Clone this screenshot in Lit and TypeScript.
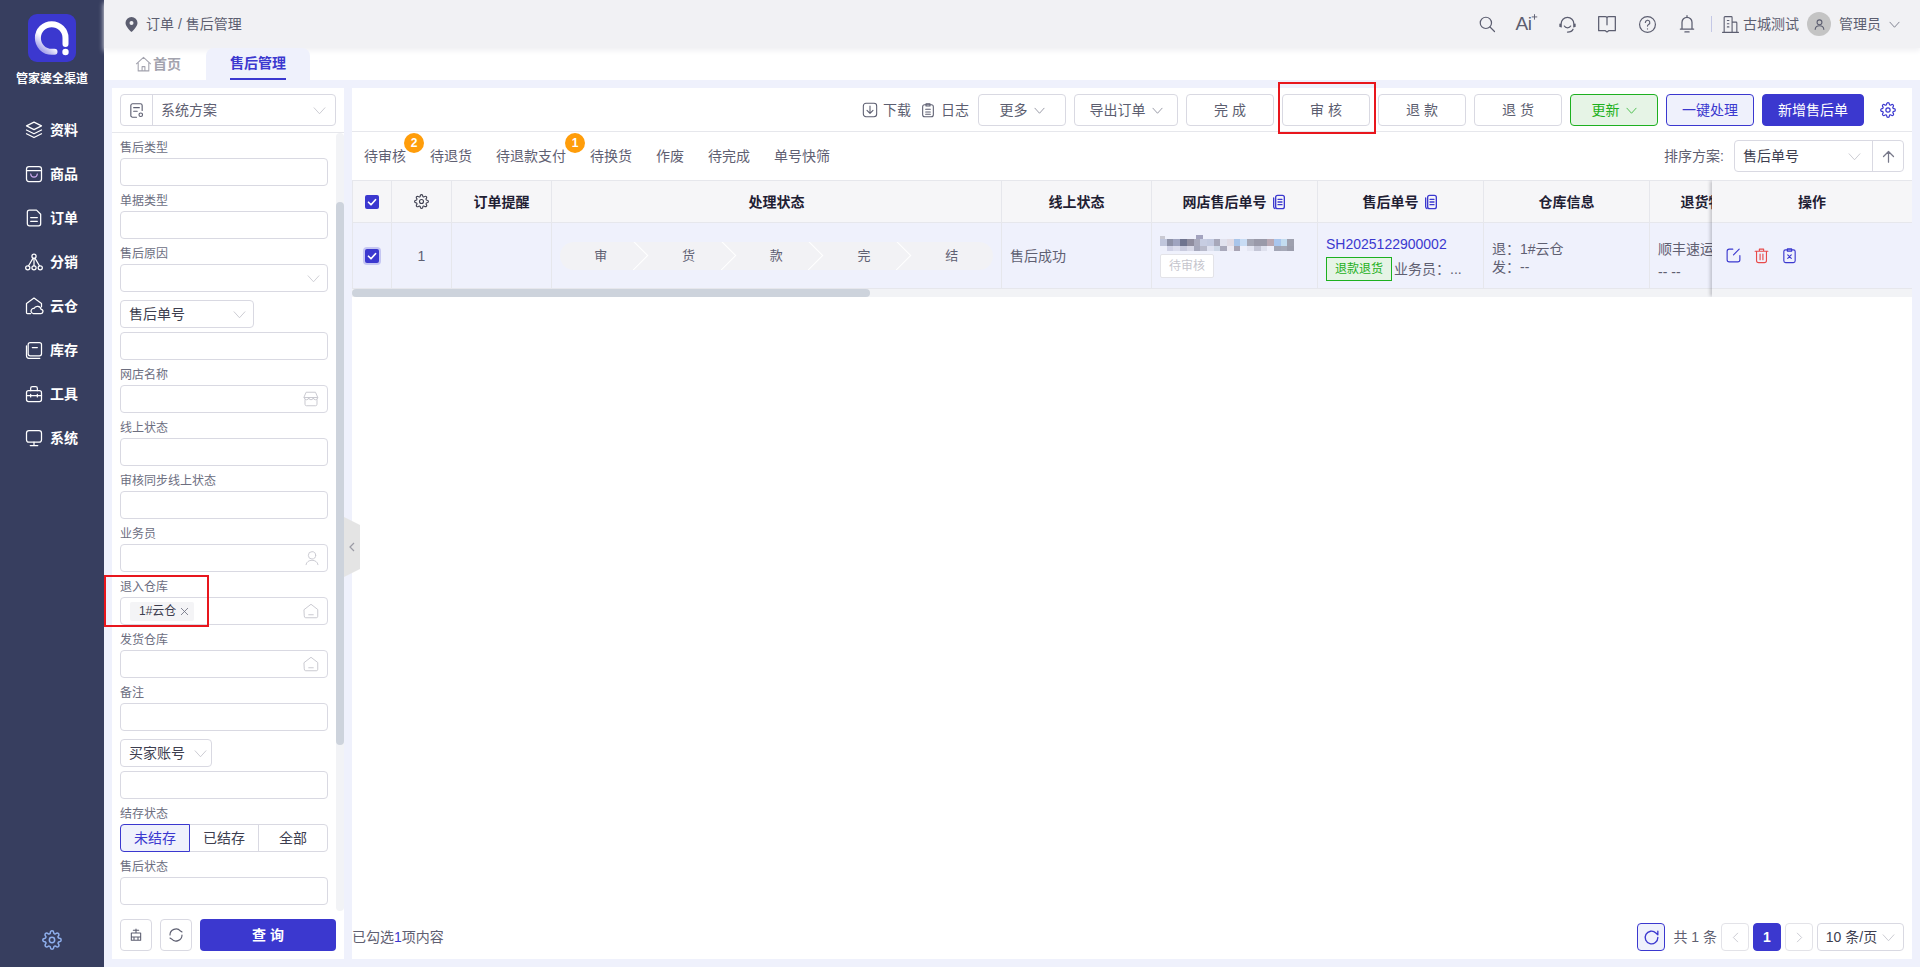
import { css, html, LitElement, svg } from 'lit';
import { customElement } from 'lit/decorators.js';

const icon = (body: unknown, size = 16, vb = 24, sw = 1.6, cls = '') =>
  html`<svg class="ic ${cls}" width=${size} height=${size} viewBox="0 0 ${vb} ${vb}" fill="none" stroke="currentColor" stroke-width=${sw} stroke-linecap="round" stroke-linejoin="round">${body}</svg>`;

const chevron = (size = 13) => icon(svg`<path d="M2 7l10 11 10-11"/>`, size, 24, 1.6, 'chev');

const gearPath = svg`<circle cx="12" cy="12" r="3.2"/><path d="M19.4 15a1.65 1.65 0 0 0 .33 1.82l.06.06a2 2 0 0 1 0 2.83 2 2 0 0 1-2.83 0l-.06-.06a1.65 1.65 0 0 0-1.82-.33 1.65 1.65 0 0 0-1 1.51V21a2 2 0 0 1-2 2 2 2 0 0 1-2-2v-.09A1.65 1.65 0 0 0 9 19.4a1.65 1.65 0 0 0-1.82.33l-.06.06a2 2 0 0 1-2.83 0 2 2 0 0 1 0-2.83l.06-.06a1.65 1.65 0 0 0 .33-1.82 1.65 1.65 0 0 0-1.51-1H3a2 2 0 0 1-2-2 2 2 0 0 1 2-2h.09A1.65 1.65 0 0 0 4.6 9a1.65 1.65 0 0 0-.33-1.82l-.06-.06a2 2 0 0 1 0-2.83 2 2 0 0 1 2.83 0l.06.06a1.65 1.65 0 0 0 1.82.33H9a1.65 1.65 0 0 0 1-1.51V3a2 2 0 0 1 2-2 2 2 0 0 1 2 2v.09a1.65 1.65 0 0 0 1 1.51 1.65 1.65 0 0 0 1.82-.33l.06-.06a2 2 0 0 1 2.83 0 2 2 0 0 1 0 2.83l-.06.06a1.65 1.65 0 0 0-.33 1.82V9a1.65 1.65 0 0 0 1.51 1H21a2 2 0 0 1 2 2 2 2 0 0 1-2 2h-.09a1.65 1.65 0 0 0-1.51 1z"/>`;

const copyIcon = icon(
  svg`<rect x="7" y="2" width="13" height="20" rx="3" stroke-width="2"/><path d="M4 6v13a3 3 0 0 0 2 2.800M10.500 8h6M10.500 12h6M10.500 16h6" stroke-width="2"/>`,
  16, 24, 2, 'copy'
);

const warehouse = icon(
  svg`<path d="M3 10l9-7 9 7v9a2 2 0 0 1-2 2H5a2 2 0 0 1-2-2z"/><path d="M9 17h6"/>`,
  18, 24, 1.3
);

const navItems = [
  ['资料', svg`<path d="M12 2.500l9 4.500-9 4.500L3 7z"/><path d="M3 12l9 4.500 9-4.500M3 16.500L12 21l9-4.500"/>`],
  ['商品', svg`<rect x="3" y="3" width="18" height="18" rx="3"/><path d="M3 8h18"/><path d="M8 12c.5 5 7.500 5 8 0" stroke="#c7a6e8"/>`],
  ['订单', svg`<path d="M6.500 2.500h8.500l5 5V19a2.500 2.500 0 0 1-2.500 2.500h-11A2.500 2.500 0 0 1 4 19V5a2.500 2.500 0 0 1 2.500-2.500z"/><path d="M8 11.500h8M8 16h8"/>`],
  ['分销', svg`<circle cx="12" cy="5" r="2.500"/><circle cx="4.500" cy="19" r="2.500"/><circle cx="12" cy="19" r="2.500"/><circle cx="19.500" cy="19" r="2.500"/><path d="M12 7.500v9M10.500 8L5.500 16.500M13.500 8l5 8.500"/>`],
  ['云仓', svg`<path d="M3 20V9l9-6.500L21 9v4M3 20a1 1 0 0 0 1 1h4"/><path d="M11 21h9a2.500 2.500 0 0 0 .5-5 4.500 4.500 0 0 0-8.500-1 3 3 0 0 0-1 6z"/>`],
  ['库存', svg`<rect x="5" y="3" width="16" height="16" rx="2.500"/><path d="M3 7v12a3 3 0 0 0 3 3h13M10 9h6"/>`],
  ['工具', svg`<rect x="3" y="8" width="18" height="13" rx="2.500"/><path d="M8 8V5a2 2 0 0 1 2-2h4a2 2 0 0 1 2 2v3M3 14h18M8 12.500v3M16 12.500v3"/>`],
  ['系统', svg`<rect x="3" y="3" width="18" height="14" rx="3"/><path d="M12 17v4M7.500 21h9"/>`],
];

const mosaicTop = [
  '#c0c6dc', '#8e92a8', '#9fa4c0', '#6f748f', '#8f8d9f', '#a9aabd', '#c7cde2', '#c3cae0', '#a7a8ba', '#e1e2ee',
  '#e1dbe4', '#a9c5ea', '#c8dcf4', '#a5a7b5', '#9a9aa9', '#9a9aa9', '#b9a9b4', '#a9c6ee', '#c3dcf0', '#9ea0ae',
];
const mosaicLow = [
  '#eef0fb', '#d0d2e6', '#dcdeee', '#c9cbde', '#d8d9e8', '#a6a8bc', '#b8bacb', '#dfe2f0', '#cdd7e6', '#a9a9bb',
  '#eceaf3', '#a8a4b4', '#eef0fb', '#e4e6f2', '#c4c6d6', '#dfe1ee', '#eef0fb', '#a3a6b6', '#a6a9b8', '#9b9dac',
];

@customElement('app-root')
export class AppRoot extends LitElement {
  static override styles = css`
    :host {
      display: block;
      width: 1920px;
      height: 967px;
      overflow: hidden;
      font-family: 'Liberation Sans', 'Noto Sans CJK SC', sans-serif;
      font-size: 14px;
      line-height: 20px;
      color: #5f6072;
      background: #fff;
    }
    * { box-sizing: border-box; }
    svg { display: block; flex: none; }
    .app { display: flex; height: 967px; }

    .side {
      width: 104px;
      flex: none;
      background: #373e5f;
      color: #fff;
      display: flex;
      flex-direction: column;
      align-items: stretch;
    }
    .logo { display: block; margin: 14px auto 0; }
    .brand { margin-top: 8px; text-align: center; font-size: 12px; font-weight: 700; line-height: 18px; height: 24px; }
    .nav { display: flex; align-items: center; gap: 6px; height: 44px; padding-left: 24px; font-weight: 700; }
    .nav-list { display: flex; flex-direction: column; margin-top: 14px; }
    .side-gear { margin: auto auto 17px; color: #8fb0ee; }

    .main { flex: 1; min-width: 0; display: flex; flex-direction: column; }
    .top {
      height: 48px;
      flex: none;
      background: #f1f1f4;
      box-shadow: 0 3px 5px #f1f1f4;
      display: flex;
      align-items: center;
      padding-left: 21px;
      position: relative;
    }
    .crumb { display: flex; align-items: center; gap: 8px; color: #5c5e70; }
    .top-right { margin-left: auto; display: flex; align-items: center; color: #5c5e70; }
    .ti { width: 40px; display: flex; justify-content: center; }
    .ai { font-size: 19px; line-height: 20px; letter-spacing: -0.5px; align-items: flex-start; }
    .vline { width: 1px; height: 16px; background: #c4c8e6; margin: 0 9px 0 4px; }
    .avatar {
      width: 24px;
      height: 24px;
      border-radius: 50%;
      background: #c4c4c4;
      display: flex;
      align-items: center;
      justify-content: center;
      margin: 0 8px;
      color: #5c5e70;
    }
    .user-chev { margin: 0 20px 0 8px; }
    .org { margin-left: 3px; }

    .tabs { height: 32px; flex: none; display: flex; padding-left: 20px; position: relative; z-index: 1; }
    .tab { width: 82px; display: flex; align-items: center; padding-left: 11px; gap: 1px; color: #a3a3ae; font-weight: 700; }
    .tab.on {
      width: 104px;
      padding-left: 0;
      justify-content: center;
      background: #eff1fc;
      border-radius: 8px 8px 0 0;
      color: #3b38cf;
      position: relative;
    }
    .tab.on span { height: 32px; line-height: 30px; border-bottom: 2px solid #3b38cf; }

    .body { flex: 1; min-height: 0; display: flex; gap: 8px; padding: 8px; background: #eff1fc; position: relative; }

    .filter { width: 232px; flex: none; background: #fff; display: flex; flex-direction: column; }
    .scheme { height: 45px; flex: none; padding: 6px 8px 0; border-bottom: 1px solid #e6e7ec; }
    .scheme-box { height: 32px; border: 1px solid #d9d9e2; border-radius: 4px; display: flex; align-items: center; }
    .scheme-ic { width: 32px; height: 30px; border-right: 1px solid #d9d9e2; display: flex; align-items: center; justify-content: center; color: #5c5e70; }
    .scheme-txt { flex: 1; padding-left: 8px; }
    .scheme-box .chev { margin-right: 9px; color: #c4c4cc; }

    .form { flex: 1; min-height: 0; display: flex; }
    .form-body { width: 224px; padding: 7px 8px 0; }
    .track { width: 8px; background: #f2f3f6; border-radius: 4px; }
    .thumb { width: 8px; height: 543px; margin-top: 69px; background: #cdd3dc; border-radius: 4px; }
    .field { margin-bottom: 7px; position: relative; }
    .field.compact { margin-bottom: 4px; }
    .field.gap-top { margin-top: 8px; }
    .label { height: 18px; line-height: 16px; font-size: 12px; color: #6c6e7f; }
    .input {
      height: 28px;
      border: 1px solid #d9d9e2;
      border-radius: 4px;
      display: flex;
      align-items: center;
      padding: 0 7px 0 7px;
      color: #c8c8d0;
    }
    .input .end { margin-left: auto; }
    .sel { margin-top: 1px; justify-content: space-between; color: #3d3e4f; padding-left: 8px; }
    .sel .chev { color: #c4c4cc; }
    .w134 { width: 134px; }
    .w92 { width: 92px; padding-right: 4px; }
    .chip {
      height: 19px;
      width: 64px;
      margin-left: 2px;
      background: #f4f4f6;
      border-radius: 2px;
      display: flex;
      align-items: center;
      padding-left: 9px;
      gap: 3px;
      font-size: 12px;
      color: #3d3e4f;
    }
    .chip svg { color: #6c6e7f; }
    .marked::after {
      content: '';
      position: absolute;
      left: -16px;
      top: -4px;
      width: 101px;
      height: 48px;
      border: 2px solid #e8161d;
    }
    .seg { display: flex; height: 28px; border: 1px solid #d9d9e2; border-radius: 4px; color: #3d3e4f; }
    .seg div { flex: 1; display: flex; align-items: center; justify-content: center; }
    .seg div + div { border-left: 1px solid #d9d9e2; }
    .seg .on { flex: none; width: 70px; margin: -1px 0 -1px -1px; border: 1px solid #3b38cf; border-radius: 4px 0 0 4px; background: #eff1fc; color: #3b38cf; }
    .seg .on + div { border-left: 0; }

    .actions { height: 48px; flex: none; display: flex; gap: 8px; padding: 8px; }
    .sq { width: 32px; height: 32px; border: 1px solid #d9d9e2; border-radius: 4px; display: flex; align-items: center; justify-content: center; color: #5c5e70; }
    .query { flex: 1; height: 32px; background: #3b38cf; color: #fff; border-radius: 4px; text-align: center; line-height: 32px; font-weight: 700; }

    .handle { position: absolute; left: 240px; top: 437px; width: 16px; height: 60px; color: #9b9ba5; }

    .content { flex: 1; min-width: 0; background: #fff; display: flex; flex-direction: column; }
    .toolbar { height: 44px; flex: none; display: flex; align-items: flex-start; justify-content: flex-end; padding-top: 6px; border-bottom: 1px solid #e6e7ec; }
    .link { display: flex; align-items: center; gap: 5px; height: 32px; margin-right: 9px; color: #5c5e70; }
    .btns { display: flex; gap: 8px; }
    .btn {
      width: 88px;
      height: 32px;
      border: 1px solid #d9d9e2;
      border-radius: 4px;
      display: flex;
      align-items: center;
      justify-content: center;
      gap: 6px;
      color: #5c5e70;
      position: relative;
      background: #fff;
    }
    .btn .chev { color: #777889; }
    .btn.wide { width: 104px; }
    .btn.flagged::after {
      content: '';
      position: absolute;
      left: -5px;
      right: -7px;
      top: -13px;
      bottom: -9px;
      border: 2px solid #e8161d;
    }
    .btn.green { background: #e6f4e6; border-color: #1db020; color: #1db020; }
    .btn.green .chev { color: #1db020; }
    .btn.ghost { background: #eff1fc; border-color: #3b38cf; color: #3b38cf; }
    .btn.solid { width: 102px; background: #3b38cf; border-color: #3b38cf; color: #fff; }
    .tool-gear { width: 48px; height: 32px; display: flex; align-items: center; justify-content: center; color: #3b38cf; }

    .quick { height: 48px; flex: none; display: flex; align-items: center; padding: 0 8px 0 12px; gap: 24px; }
    .q { position: relative; color: #5f6072; }
    .badge {
      position: absolute;
      left: 100%;
      top: -13px;
      margin-left: -2px;
      width: 20px;
      height: 20px;
      border-radius: 50%;
      background: #ff9d0a;
      color: #fff;
      font-size: 12px;
      font-weight: 700;
      line-height: 20px;
      text-align: center;
    }
    .badge.far { margin-left: -1px; }
    .sort { margin-left: auto; display: flex; align-items: center; gap: 10px; }
    .sort-box { width: 170px; height: 32px; border: 1px solid #d9d9e2; border-radius: 4px; display: flex; align-items: center; color: #3d3e4f; padding-left: 8px; }
    .sort-box .chev { margin-left: auto; margin-right: 11px; color: #c4c4cc; }
    .sort-up { width: 31px; height: 30px; border-left: 1px solid #d9d9e2; display: flex; align-items: center; justify-content: center; color: #777889; }

    .table { position: relative; height: 117px; flex: none; overflow: hidden; }
    .grid { display: grid; grid-template-columns: 40px 60px 100px 450px 150px 166px 166px 166px 118px; }
    .thead { height: 43px; background: #f6f6f8; border-top: 1px solid #e6e7ec; border-bottom: 1px solid #e6e7ec; font-weight: 700; color: #1f2033; }
    .trow { height: 66px; background: #eff1fc; border-bottom: 1px solid #e6e7ec; }
    .grid > div { border-right: 1px solid #e6e7ec; display: flex; align-items: center; justify-content: center; min-width: 0; overflow: hidden; white-space: nowrap; gap: 4px; }
    .grid > div:first-child { border-left: 1px solid #e6e7ec; }
    .thead svg.copy { color: #3b38cf; }
    .thead .g { color: #3d3e4f; }
    .check { width: 14px; height: 14px; border-radius: 2px; background: #3b38cf; display: flex; align-items: center; justify-content: center; color: #fff; }
    .check.halo { box-shadow: 0 0 0 2px #c5c6f2; }
    .grid > div.left { justify-content: flex-start; padding-left: 8px; }
    .grid > div.stack { flex-direction: column; align-items: flex-start; justify-content: flex-start; gap: 0; }

    .steps { width: 433px; height: 28px; border-radius: 14px; background: #f2f2f5; display: flex; overflow: hidden; font-size: 13px; }
    .step { flex: none; width: 87.75px; display: flex; align-items: center; justify-content: center; position: relative; }
    .step:first-child { margin-left: -3px; }
    .step:not(:last-child)::after {
      content: '';
      position: absolute;
      right: 1px;
      top: 3px;
      width: 20px;
      height: 20px;
      border-top: 1px solid #fff;
      border-right: 1px solid #fff;
      transform: rotate(45deg);
    }
    .blur { margin: 12px 0 0; filter: blur(0.3px); }
    .pending { margin-top: 2px; width: 54px; height: 24px; border: 1px solid #e3e3e8; border-radius: 2px; background: #fff; color: #c5c5cd; font-size: 12px; text-align: center; line-height: 22px; }
    .so { margin-top: 11px; color: #3b38cf; line-height: 20px; }
    .so-line { display: flex; align-items: center; gap: 2px; margin-top: 3px; }
    .refund { width: 66px; height: 24px; border: 1px solid #1db020; background: #e6f4e6; color: #1db020; font-size: 12px; text-align: center; line-height: 22px; }
    .wh { padding-top: 17px; line-height: 18px; }
    .ret { padding-top: 16px; }
    .ret div { line-height: 20px; }
    .ret div + div { margin-top: 3px; }

    .fixed { position: absolute; top: 0; right: 0; bottom: 0; width: 200px; box-shadow: -3px 0 3px -1px rgba(60, 60, 70, 0.25); }
    .fixed .h { height: 43px; background: #f6f6f8; border-top: 1px solid #e6e7ec; border-bottom: 1px solid #e6e7ec; display: flex; align-items: center; justify-content: center; font-weight: 700; color: #1f2033; }
    .fixed .r { height: 66px; background: #eff1fc; border-bottom: 1px solid #e6e7ec; display: flex; align-items: center; padding-left: 13px; gap: 11px; color: #3b38cf; }
    .fixed .r .del { color: #e84a4a; }
    .strip { position: absolute; left: 0; right: 0; bottom: 0; height: 8px; background: #f2f3f6; }
    .strip div { width: 518px; height: 8px; background: #cdd3dc; border-radius: 4px; }

    .grow { flex: 1; }
    .foot { height: 44px; flex: none; display: flex; align-items: center; padding: 0 8px 0 0; color: #5f6072; }
    .foot b { font-weight: 400; color: #3b38cf; }
    .foot .pager { margin-left: auto; display: flex; align-items: center; gap: 4px; }
    .pg { width: 28px; height: 28px; border: 1px solid #e3e3e8; border-radius: 4px; display: flex; align-items: center; justify-content: center; color: #c4c4cc; }
    .pg.on { background: #3b38cf; border-color: #3b38cf; color: #fff; font-weight: 700; }
    .pg.reload { background: #eff1fc; border-color: #3b38cf; color: #3b38cf; margin-right: 4px; }
    .size { width: 87px; height: 28px; border: 1px solid #d9d9e2; border-radius: 4px; display: flex; align-items: center; justify-content: center; gap: 5px; color: #3d3e4f; }
    .size .chev { color: #c4c4cc; }
  `;

  private field(label: string, end?: unknown) {
    return html`<div class="field">
      <div class="label">${label}</div>
      <div class="input">${end ? html`<span class="end">${end}</span>` : ''}</div>
    </div>`;
  }

  private renderSide() {
    return html`<aside class="side">
      <svg class="logo" width="48" height="48" viewBox="0 0 48 48">
        <defs>
          <linearGradient id="lg" x1="0.1" y1="0.9" x2="0.6" y2="0.3">
            <stop offset="0" stop-color="#a9a6ec" />
            <stop offset="0.5" stop-color="#fff" />
          </linearGradient>
        </defs>
        <rect width="48" height="48" rx="9" fill="#3b38cf" />
        <path d="M37.500 30V24A13.800 13.800 0 1 0 23.700 37.800H26.500" fill="none" stroke="url(#lg)" stroke-width="6" stroke-linecap="round" />
        <circle cx="37.500" cy="38" r="3.200" fill="#fff" />
      </svg>
      <div class="brand">管家婆全渠道</div>
      <div class="nav-list">
        ${navItems.map(([t, p]) => html`<div class="nav">${icon(p, 20, 24, 1.5)}<span>${t}</span></div>`)}
      </div>
      <span class="side-gear">${icon(gearPath, 20, 24, 1.8)}</span>
    </aside>`;
  }

  private renderTop() {
    return html`<header class="top">
      <div class="crumb">
        <svg width="13" height="15" viewBox="0 0 13 15">
          <path d="M6.500 0A6 6 0 0 0 .5 6c0 4 6 9 6 9s6-5 6-9a6 6 0 0 0-6-6z" fill="#5c5e70" />
          <circle cx="6.500" cy="6" r="2" fill="#f1f1f4" />
        </svg>
        <span>订单 / 售后管理</span>
      </div>
      <div class="top-right">
        <span class="ti">${icon(svg`<circle cx="10.500" cy="10.500" r="7.500"/><path d="M16 16l6 6"/>`, 18, 24, 1.6)}</span>
        <span class="ti ai">Ai${icon(svg`<path d="M6 1v8M2 5h8"/>`, 7, 12, 1.6)}</span>
        <span class="ti">${icon(svg`<path d="M4 15v-4a8 8 0 0 1 16 0v4M2.500 11.500v3M21.500 11.500v3M8 14c1.500 3 6.500 3 8 0M19 18c-1 2.500-4 3.500-7 3.500"/>`, 19, 24, 1.6)}</span>
        <span class="ti">${icon(svg`<path d="M2 3h8c1.500 0 2 .8 2 2 0-1.200.5-2 2-2h8v17h-8l-2 1.500L10 20H2zM12 5v8"/>`, 20, 24, 1.5)}</span>
        <span class="ti">${icon(svg`<circle cx="12" cy="12" r="10"/><path d="M9.300 9.500a2.800 2.800 0 1 1 4 2.500c-.9.500-1.300 1-1.300 2"/><path d="M12 17.500v.1"/>`, 19, 24, 1.5)}</span>
        <span class="ti">${icon(svg`<path d="M6 18V10a6 6 0 0 1 12 0v8M4 18h16M12 2v2M9.500 21.500h5"/>`, 20, 24, 1.5)}</span>
        <span class="vline"></span>
        ${icon(svg`<path d="M2 22h20M4 22V3a1 1 0 0 1 1-1h8a1 1 0 0 1 1 1v19M14 9h5a1 1 0 0 1 1 1v12M8 7h2M8 11h2M8 15h2"/>`, 19, 24, 1.4)}
        <span class="org">古城测试</span>
        <span class="avatar">${icon(svg`<circle cx="12" cy="8" r="4.500"/><path d="M4 21c1-9 15-9 16 0"/>`, 13, 24, 2)}</span>
        <span>管理员</span>
        <span class="user-chev">${chevron(11)}</span>
      </div>
    </header>`;
  }

  private renderFilter() {
    const user = icon(svg`<circle cx="12" cy="8" r="5.500"/><path d="M3 22c1-9 17-9 18 0"/>`, 16, 24, 1.4);
    const shop = icon(svg`<path d="M6 3h12l3 7H3zM3 10a3 3 0 0 0 6 0 3 3 0 0 0 6 0 3 3 0 0 0 6 0M4 13v6a2 2 0 0 0 2 2h12a2 2 0 0 0 2-2v-6"/>`, 18, 24, 1.3);
    return html`<section class="filter">
      <div class="scheme">
        <div class="scheme-box">
          <span class="scheme-ic">${icon(svg`<path d="M20 12V5a2.500 2.500 0 0 0-2.500-2.500h-11A2.500 2.500 0 0 0 4 5v14a2.500 2.500 0 0 0 2.500 2.500H12M8 8h8M8 13h5"/><circle cx="18" cy="18" r="2.500"/>`, 17, 24, 1.6)}</span>
          <span class="scheme-txt">系统方案</span>
          ${chevron()}
        </div>
      </div>
      <div class="form">
        <div class="form-body">
          ${this.field('售后类型')}
          ${this.field('单据类型')}
          ${this.field('售后原因', chevron())}
          <div class="field compact gap-top"><div class="input sel w134"><span>售后单号</span>${chevron()}</div></div>
          <div class="field"><div class="input"></div></div>
          ${this.field('网店名称', shop)}
          ${this.field('线上状态')}
          ${this.field('审核同步线上状态')}
          ${this.field('业务员', user)}
          <div class="field marked">
            <div class="label">退入仓库</div>
            <div class="input">
              <span class="chip">1#云仓 ${icon(svg`<path d="M5 5l14 14M19 5L5 19"/>`, 11, 24, 1.8)}</span>
              <span class="end">${warehouse}</span>
            </div>
          </div>
          ${this.field('发货仓库', warehouse)}
          ${this.field('备注')}
          <div class="field compact gap-top"><div class="input sel w92"><span>买家账号</span>${chevron()}</div></div>
          <div class="field"><div class="input"></div></div>
          <div class="field">
            <div class="label">结存状态</div>
            <div class="seg"><div class="on">未结存</div><div>已结存</div><div>全部</div></div>
          </div>
          ${this.field('售后状态')}
        </div>
        <div class="track"><div class="thumb"></div></div>
      </div>
      <div class="actions">
        <span class="sq">${icon(svg`<path d="M12 3v6M8 5h8M6 9h12M5 9v11h14V9M5 15h14M9 15v5M15 15v5"/>`, 16, 24, 1.6)}</span>
        <span class="sq">${icon(svg`<path d="M4 12a8 8 0 0 1 14-5.300L20 8M20 12a8 8 0 0 1-14 5.300L4 16"/>`, 18, 24, 1.5)}</span>
        <span class="query">查 询</span>
      </div>
    </section>`;
  }

  private renderToolbar() {
    return html`<div class="toolbar">
      <span class="link">${icon(svg`<rect x="2" y="2" width="20" height="20" rx="4"/><path d="M12 6v11M7.500 12.500L12 17l4.500-4.500"/>`, 16, 24, 1.6)}下载</span>
      <span class="link">${icon(svg`<rect x="4" y="4" width="16" height="18" rx="3"/><path d="M9 2.500h6V6H9zM8.500 11h7M8.500 15h7M8.500 18.500h7"/>`, 16, 24, 1.6)}日志</span>
      <div class="btns">
        <span class="btn">更多 ${chevron(11)}</span>
        <span class="btn wide">导出订单 ${chevron(11)}</span>
        <span class="btn">完 成</span>
        <span class="btn flagged">审 核</span>
        <span class="btn">退 款</span>
        <span class="btn">退 货</span>
        <span class="btn green">更新 ${chevron(11)}</span>
        <span class="btn ghost">一键处理</span>
        <span class="btn solid">新增售后单</span>
      </div>
      <span class="tool-gear">${icon(gearPath, 16, 24, 1.8)}</span>
    </div>`;
  }

  private renderTable() {
    const tick = icon(svg`<path d="M5 12.500l5 5 9-10"/>`, 12, 24, 3.4);
    return html`<div class="table">
      <div class="grid thead">
        <div><span class="check">${tick}</span></div>
        <div><span class="g">${icon(gearPath, 15, 24, 1.8)}</span></div>
        <div>订单提醒</div>
        <div>处理状态</div>
        <div>线上状态</div>
        <div>网店售后单号 ${copyIcon}</div>
        <div>售后单号 ${copyIcon}</div>
        <div>仓库信息</div>
        <div>退货物流</div>
      </div>
      <div class="grid trow">
        <div><span class="check halo">${tick}</span></div>
        <div>1</div>
        <div></div>
        <div>
          <div class="steps">
            ${['审', '货', '款', '完', '结'].map((s) => html`<div class="step">${s}</div>`)}
          </div>
        </div>
        <div class="left">售后成功</div>
        <div class="left stack">
          <svg class="blur" width="134" height="17" viewBox="0 0 134 17" shape-rendering="crispEdges">
            <rect x="0" y="1" width="5" height="10" fill="#c9c9d2" />
            <rect x="36" y="0" width="7" height="4" fill="#a3a3bf" />
            ${mosaicTop.map((c, i) => svg`<rect x=${i * 6.7} y="4" width="6.700" height="7" fill=${c} />`)}
            ${mosaicLow.map((c, i) => svg`<rect x=${i * 6.7} y="11" width="6.700" height="5" fill=${c} />`)}
          </svg>
          <div class="pending">待审核</div>
        </div>
        <div class="left stack">
          <div class="so">SH2025122900002</div>
          <div class="so-line"><span class="refund">退款退货</span><span>业务员：...</span></div>
        </div>
        <div class="left stack wh"><div>退：1#云仓</div><div>发：--</div></div>
        <div class="left stack ret"><div>顺丰速运</div><div>-- --</div></div>
      </div>
      <div class="strip"><div></div></div>
      <div class="fixed">
        <div class="h">操作</div>
        <div class="r">
          ${icon(svg`<path d="M11 3H6a3 3 0 0 0-3 3v12a3 3 0 0 0 3 3h12a3 3 0 0 0 3-3v-6M20 3l-8 8"/>`, 17, 24, 1.6)}
          <span class="del">${icon(svg`<path d="M3 6h18M9 6V3h6v3M5 6v13a3 3 0 0 0 3 3h8a3 3 0 0 0 3-3V6M10 10v8M14 10v8"/>`, 17, 24, 1.6)}</span>
          ${icon(svg`<rect x="4" y="4" width="16" height="18" rx="2.500"/><path d="M9 2.500h6V6H9zM9.500 11l5 5M14.500 11l-5 5"/>`, 17, 24, 1.6)}
        </div>
      </div>
    </div>`;
  }

  override render() {
    return html`<div class="app">
      ${this.renderSide()}
      <div class="main">
        ${this.renderTop()}
        <nav class="tabs">
          <div class="tab">${icon(svg`<path d="M2 11l10-9 10 9M4.500 9.500V21h15V9.500M10 21v-6h4v6"/>`, 17, 24, 1.5)}<span>首页</span></div>
          <div class="tab on"><span>售后管理</span></div>
        </nav>
        <div class="body">
          ${this.renderFilter()}
          <svg class="handle" viewBox="0 0 16 60">
            <path d="M0 0L16 8V52L0 60z" fill="#e4e4e4" />
            <path d="M10 26l-4 4 4 4" fill="none" stroke="currentColor" stroke-width="1.200" />
          </svg>
          <main class="content">
            ${this.renderToolbar()}
            <div class="quick">
              <span class="q">待审核<span class="badge">2</span></span>
              <span class="q">待退货</span>
              <span class="q">待退款支付<span class="badge far">1</span></span>
              <span class="q">待换货</span>
              <span class="q">作废</span>
              <span class="q">待完成</span>
              <span class="q">单号快筛</span>
              <div class="sort">
                <span>排序方案:</span>
                <div class="sort-box">
                  <span>售后单号</span>${chevron()}
                  <span class="sort-up">${icon(svg`<path d="M12 21V4M4 12l8-8 8 8"/>`, 15, 24, 2)}</span>
                </div>
              </div>
            </div>
            ${this.renderTable()}
            <div class="grow"></div>
            <div class="foot">
              <span>已勾选<b>1</b>项内容</span>
              <div class="pager">
                <span class="pg reload">${icon(svg`<path d="M20 12a8 8 0 1 1-2.500-5.800L20 8.500V4"/>`, 19, 24, 1.7)}</span>
                <span>共 1 条</span>
                <span class="pg">${icon(svg`<path d="M16 4l-8 8 8 8"/>`, 13, 24, 1.6)}</span>
                <span class="pg on">1</span>
                <span class="pg">${icon(svg`<path d="M8 4l8 8-8 8"/>`, 13, 24, 1.6)}</span>
                <span class="size">10 条/页 ${chevron()}</span>
              </div>
            </div>
          </main>
        </div>
      </div>
    </div>`;
  }
}
